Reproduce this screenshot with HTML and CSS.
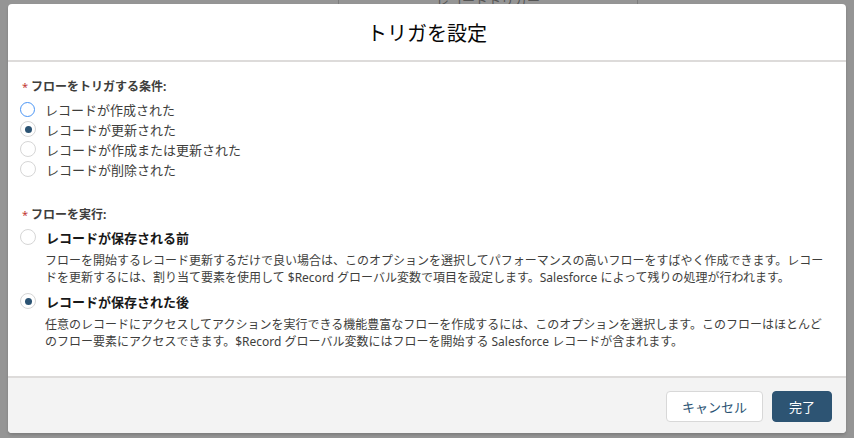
FILE: index.html
```html
<!DOCTYPE html>
<html lang="ja">
<head>
<meta charset="UTF-8" />
<title>トリガを設定</title>
<link rel="stylesheet" href="styles.css">
</head>
<body>
  <div class="behind">レコードトリガー</div>

  <div class="modal">
    <div class="modal-header">
      <h2>トリガを設定</h2>
    </div>

    <div class="modal-body">
      <fieldset class="group">
        <legend class="group-label"><abbr>*</abbr>フローをトリガする条件:</legend>
        <label class="radio-row">
          <span class="radio focus"></span>
          <span>レコードが作成された</span>
        </label>
        <label class="radio-row">
          <span class="radio checked"></span>
          <span>レコードが更新された</span>
        </label>
        <label class="radio-row">
          <span class="radio"></span>
          <span>レコードが作成または更新された</span>
        </label>
        <label class="radio-row">
          <span class="radio"></span>
          <span>レコードが削除された</span>
        </label>
      </fieldset>

      <fieldset class="group second">
        <legend class="group-label"><abbr>*</abbr>フローを実行:</legend>
        <label class="radio-row">
          <span class="radio"></span>
          <span class="option-title">レコードが保存される前</span>
        </label>
        <p class="option-desc">フローを開始するレコード更新するだけで良い場合は、このオプションを選択してパフォーマンスの高いフローをすばやく作成できます。レコードを更新するには、割り当て要素を使用して $Record グローバル変数で項目を設定します。Salesforce によって残りの処理が行われます。</p>
        <label class="radio-row">
          <span class="radio checked"></span>
          <span class="option-title">レコードが保存された後</span>
        </label>
        <p class="option-desc">任意のレコードにアクセスしてアクションを実行できる機能豊富なフローを作成するには、このオプションを選択します。このフローはほとんどのフロー要素にアクセスできます。$Record グローバル変数にはフローを開始する Salesforce レコードが含まれます。</p>
      </fieldset>
    </div>

    <div class="modal-footer">
      <button class="btn">キャンセル</button>
      <button class="btn brand">完了</button>
    </div>
  </div>
</body>
</html>
```

FILE: styles.css
```css
html, body {
  margin: 0;
  height: 100%;
}
body {
  background: #959595;
  font-family: "Noto Sans", "Noto Sans CJK JP", sans-serif;
  color: #3e3e3c;
  padding: 4px 8px 5px;
  box-sizing: border-box;
  position: relative;
  overflow: hidden;
}
.behind {
  position: absolute;
  left: 338px;
  top: -30px;
  width: 298px;
  height: 33px;
  border: 1px solid #7d7d7d;
  background: #959595;
  color: #555;
  font-size: 13px;
  text-align: center;
  line-height: 58px;
}
.modal {
  position: relative;
  height: 100%;
  background: #fff;
  border-radius: 4px;
  display: flex;
  flex-direction: column;
  overflow: hidden;
  box-shadow: 0 2px 3px rgba(0, 0, 0, 0.16);
}
.modal-header {
  height: 56px;
  border-bottom: 2px solid #dddbda;
  display: flex;
  align-items: center;
  justify-content: center;
}
.modal-header h2 {
  margin: 0;
  font-size: 20px;
  font-weight: 400;
  color: #080707;
}
.modal-body {
  flex: 1;
  padding: 16px 16px 0 12px;
}
.group {
  border: 0;
  margin: 0;
  padding: 0;
}
.group.second {
  margin-top: 27px;
}
.group-label {
  padding: 0;
  font-size: 12px;
  font-weight: 700;
  line-height: 18px;
  margin-bottom: 3px;
}
.group-label abbr {
  color: #c23934;
  margin: 0 3px 0 2px;
  font-size: 11px;
  font-weight: 400;
}
.radio-row {
  display: flex;
  align-items: center;
  height: 20px;
  gap: 10px;
  font-size: 13px;
}
.option-desc + .radio-row {
  margin-top: 5px;
}
.radio {
  width: 14px;
  height: 14px;
  border: 1px solid #d6d6d6;
  border-radius: 50%;
  box-sizing: content-box;
  display: flex;
  align-items: center;
  justify-content: center;
  flex: none;
}
.radio.focus {
  border: 1.5px solid #4a95f5;
  width: 13px;
  height: 13px;
}
.radio.checked::after {
  content: "";
  width: 7px;
  height: 7px;
  border-radius: 50%;
  background: #2b5373;
}
.option-title {
  font-weight: 700;
  font-size: 13px;
  color: #181818;
}
.option-desc {
  margin: 5px 0 0 25px;
  font-size: 12px;
  line-height: 17px;
}
.modal-footer {
  height: 55px;
  border-top: 2px solid #dddbda;
  background: #f3f3f3;
  display: flex;
  align-items: center;
  justify-content: flex-end;
  gap: 9px;
  padding: 0 14px 0 0;
}
.btn {
  height: 31px;
  padding: 0;
  border: 1px solid #d8d8d8;
  border-radius: 4px;
  background: #fff;
  color: #2b5373;
  font-family: inherit;
  font-size: 13px;
  white-space: nowrap;
  margin-top: 1px;
}
.btn:first-child {
  width: 97px;
}
.btn.brand {
  width: 60px;
  background: #2d5473;
  border-color: #2d5473;
  color: #fff;
}
```
